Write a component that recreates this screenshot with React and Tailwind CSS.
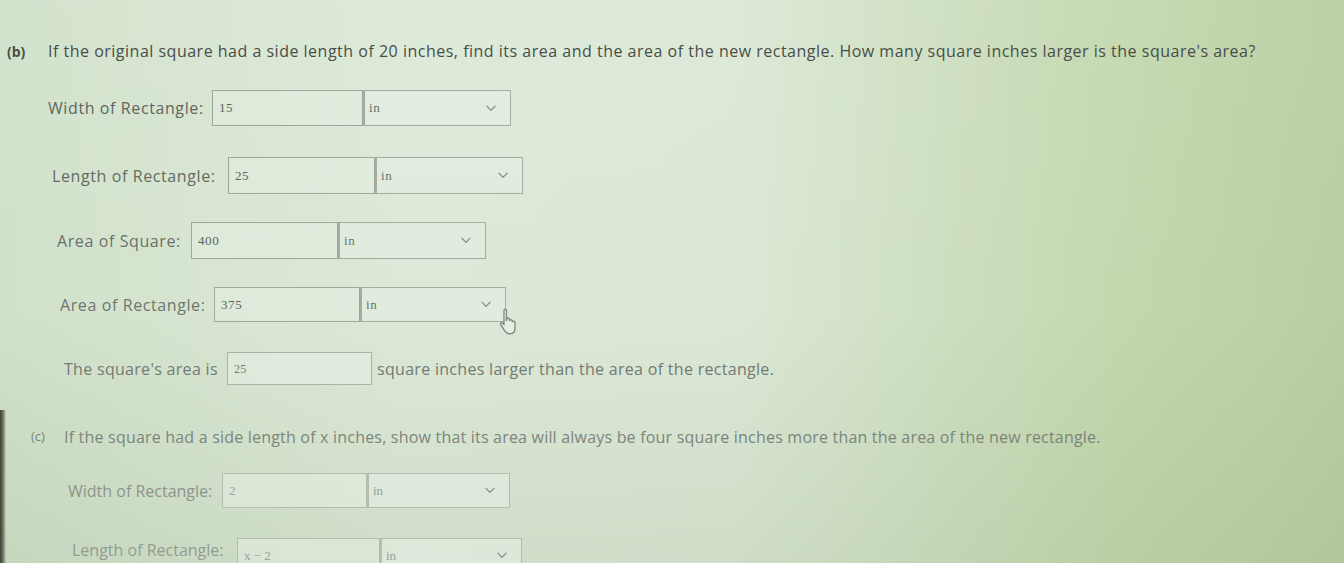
import React from "react";

function Chevron() {
  return (
    <svg width="10" height="7" viewBox="0 0 10 7" fill="none" className="shrink-0">
      <path d="M1 1.2 L5 5.4 L9 1.2" stroke="#8a948a" strokeWidth="1.3" strokeLinecap="round" strokeLinejoin="round" />
    </svg>
  );
}

function Field({ value, inW, selW, h = "h-[36px]", dim = false }) {
  return (
    <div className={`flex ${h}`}>
      <div
        className={`${inW} h-full border ${dim ? "border-[#b3bdb0]" : "border-[#9ea89c]"} bg-[#e2ece0]/60 flex items-center pl-[6px] text-[13px] ${dim ? "text-[#9aa39a]" : "text-[#5d655d]"}`}
        style={{ fontFamily: "'Liberation Serif', 'DejaVu Serif', serif" }}
      >
        {value}
      </div>
      <div
        className={`${selW} h-full border border-l-2 ${dim ? "border-[#b3bdb0]" : "border-[#a3ada1]"} bg-[#e4eee2]/60 flex items-center justify-between pl-[4px] pr-[14px] text-[13px] ${dim ? "text-[#9aa39a]" : "text-[#6a726a]"}`}
        style={{ fontFamily: "'Liberation Serif', 'DejaVu Serif', serif" }}
      >
        <span>in</span>
        <Chevron />
      </div>
    </div>
  );
}

export default function App() {
  return (
    <div
      className="relative w-full h-[563px] overflow-hidden bg-[linear-gradient(90deg,#d1e1ca_0%,#dce9d8_30%,#dbe8d6_55%,#c6d9b2_80%,#b9cfa1_100%)]"
      style={{ fontFamily: "'Open Sans', 'Noto Sans', sans-serif" }}
    >
      <div className="absolute inset-0 bg-[linear-gradient(180deg,rgba(255,255,255,0.05)_0%,rgba(255,255,255,0)_55%,rgba(120,140,100,0.12)_100%)] pointer-events-none" />
      <div className="absolute left-0 top-[410px] w-[6px] h-[153px] bg-[linear-gradient(90deg,#3d4236_0%,#6b7160_50%,rgba(160,170,150,0)_100%)]" />

      <div className="relative flex flex-col pt-[41px]">
        {/* (b) question */}
        <div className="flex items-center h-[20px] text-[16px] text-[#484e48] tracking-[0.5px]">
          <span className="w-[48px] pl-[7px] font-bold text-[14px] tracking-normal">(b)</span>
          <span>
            If the original square had a side length of 20 inches, find its area and the area of the new rectangle. How many square inches larger is the square's area?
          </span>
        </div>

        {/* Width */}
        <div className="flex items-center mt-[29px] ml-[48px] text-[16px] tracking-[0.6px] text-[#5f665f]">
          <span className="w-[164px]">Width of Rectangle:</span>
          <Field value="15" inW="w-[151px]" selW="w-[148px]" />
        </div>

        {/* Length */}
        <div className="flex items-center mt-[31px] ml-[52px] text-[16px] tracking-[0.6px] text-[#646b64]">
          <span className="w-[176px]">Length of Rectangle:</span>
          <Field value="25" inW="w-[147px]" selW="w-[148px]" h="h-[37px]" />
        </div>

        {/* Area of Square */}
        <div className="flex items-center mt-[28px] ml-[57px] text-[16px] tracking-[0.6px] text-[#6a716a]">
          <span className="w-[134px]">Area of Square:</span>
          <Field value="400" inW="w-[147px]" selW="w-[148px]" h="h-[37px]" />
        </div>

        {/* Area of Rectangle */}
        <div className="relative flex items-center mt-[28px] ml-[60px] text-[16px] tracking-[0.6px] text-[#6e756e]">
          <span className="w-[154px]">Area of Rectangle:</span>
          <Field value="375" inW="w-[146px]" selW="w-[146px]" h="h-[35px]" />
          <svg
            className="absolute left-[438px] top-[20px]"
            width="24"
            height="32"
            viewBox="0 0 20 26"
            fill="none"
          >
            <path
              d="M5 2.5 C5 1.2 7 1.2 7 2.5 L7 11 L7.5 9.5 C7.8 8.5 9.6 8.6 9.6 10 L9.8 11 C10.1 10 11.9 10.1 11.9 11.4 L12 12 C12.4 11.2 14.2 11.3 14.2 12.8 L14.2 17 C14.2 20 12.5 22 10 22 C7.5 22 6.3 20.8 5.2 19 L2.3 14.4 C1.6 13.2 3 12.2 4 13.2 L5 14.4 Z"
              fill="#e6efe3"
              stroke="#7f897e"
              strokeWidth="1.1"
              strokeLinejoin="round"
            />
          </svg>
        </div>

        {/* square's area is */}
        <div className="flex items-center mt-[30px] ml-[64px] text-[16px] tracking-[0.3px] text-[#737a73]">
          <span className="w-[163px]">The square's area is</span>
          <div
            className="w-[145px] h-[33px] border border-[#a9b3a7] bg-[#e4eee2]/60 flex items-center pl-[6px] text-[12px] text-[#788078]"
            style={{ fontFamily: "'Liberation Serif', 'DejaVu Serif', serif" }}
          >
            25
          </div>
          <span className="ml-[5px]">square inches larger than the area of the rectangle.</span>
        </div>

        {/* (c) question */}
        <div className="flex items-center mt-[42px] h-[20px] text-[16px] text-[#7c857c] tracking-[0.2px]">
          <span className="w-[64px] pl-[31px] text-[13px] tracking-normal">(c)</span>
          <span>
            If the square had a side length of x inches, show that its area will always be four square inches more than the area of the new rectangle.
          </span>
        </div>

        {/* (c) Width */}
        <div className="flex items-center mt-[26px] ml-[68px] text-[16px] text-[#8c958b]">
          <span className="w-[154px]">Width of Rectangle:</span>
          <Field value="2" inW="w-[145px]" selW="w-[143px]" h="h-[35px]" dim />
        </div>

        {/* (c) Length */}
        <div className="flex items-start mt-[30px] ml-[72px] text-[16px] text-[#939c92]">
          <span className="w-[165px] pt-[1px] leading-[22px]">Length of Rectangle:</span>
          <Field value="x − 2" inW="w-[143px]" selW="w-[142px]" h="h-[35px]" dim />
        </div>
      </div>
    </div>
  );
}
